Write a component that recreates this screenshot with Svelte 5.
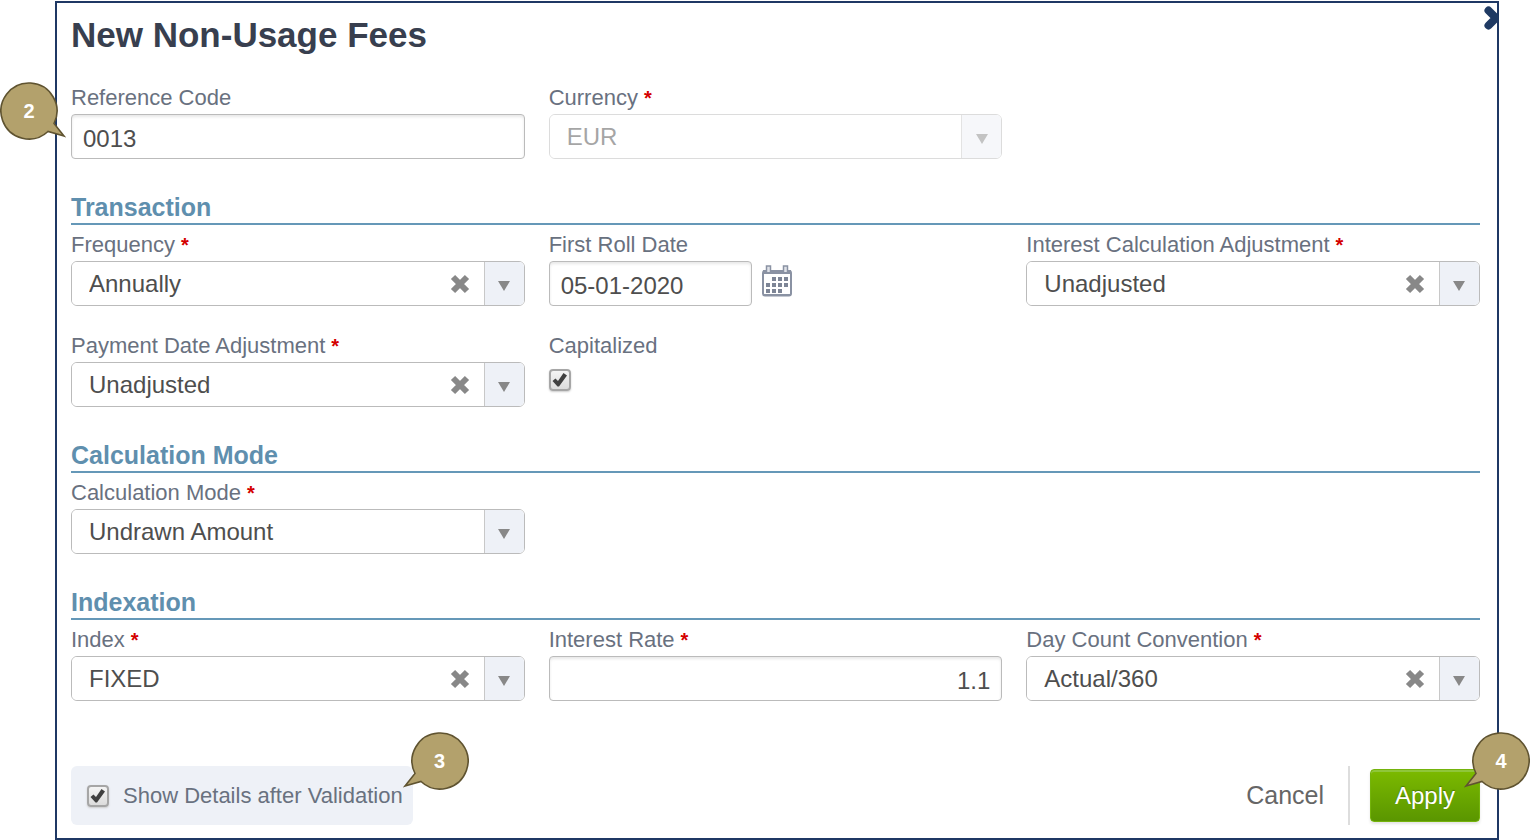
<script>
	let form = $state({
		reference: "0013",
		currency: "EUR",
		frequency: "Annually",
		firstRoll: "05-01-2020",
		interestAdjustment: "Unadjusted",
		paymentAdjustment: "Unadjusted",
		capitalized: true,
		mode: "Undrawn Amount",
		index: "FIXED",
		rate: "1.1",
		dayCount: "Actual/360",
		showDetails: true
	});

	const options = {
		currency: ["EUR"],
		frequency: ["Annually"],
		interestAdjustment: ["Unadjusted"],
		paymentAdjustment: ["Unadjusted"],
		mode: ["Undrawn Amount"],
		index: ["FIXED"],
		dayCount: ["Actual/360"]
	};

	// x, y, of the day squares in the calendar icon
	const days = [
		[10, 12], [16, 12], [22, 12],
		[4, 18], [10, 18], [16, 18], [22, 18],
		[4, 24], [10, 24], [16, 24]
	];
</script>

{#snippet label(id, text, required)}
	<label class="label" for={id}>{text}{#if required}<span class="star">*</span>{/if}</label>
{/snippet}

{#snippet dropdown(id, text, clearable = true, disabled = false)}
	<div class="field">
		{@render label(id, text, true)}
		<div class="dropdown" class:disabled>
			<select {id} bind:value={form[id]} {disabled}>
				{#each options[id] as option}
					<option>{option}</option>
				{/each}
			</select>
			{#if clearable}
				<button type="button" class="clear" aria-label="Clear {text}" onclick={() => form[id] = ""}>
					<svg viewBox="0 0 20 20" width="20" height="20"><path d="M3 3 17 17M17 3 3 17" stroke="#888" stroke-width="6" /></svg>
				</button>
			{/if}
			<span class="arrow">
				<svg viewBox="0 0 12 10" width="12" height="10"><path d="M0 0h12L6 10z" fill="#888" /></svg>
			</span>
		</div>
	</div>
{/snippet}

{#snippet callout(number, flipped = false)}
	<span class="callout callout-{number}" class:flipped>
		<svg viewBox="-29 -29 66 58" width="66" height="58">
			<path d="M35 25 19 20.500A28 28 0 1 1 25 12.500Z" fill="#b3a16c" stroke="#5f5330" stroke-width="1.600" />
		</svg>
		<b>{number}</b>
	</span>
{/snippet}

{#snippet checkbox(id)}
	<span class="check">
		<input type="checkbox" {id} bind:checked={form[id]} />
		{#if form[id]}
			<svg viewBox="0 0 22 22" width="22" height="22"><path d="M3.500 12 6.500 9.500 9 12 14.500 4 18 6.500 10 17.500H8.500Z" fill="#404040" /></svg>
		{/if}
	</span>
{/snippet}

<form class="dialog" onsubmit={(e) => e.preventDefault()}>
	<button type="button" class="close" aria-label="Close">
		<svg viewBox="0 0 16 26" width="16" height="26"><path d="M5.500 5.500 13 13 5.500 20.500" fill="none" stroke="#1f3a63" stroke-width="8" stroke-linecap="round" stroke-linejoin="round" /></svg>
	</button>

	<h1>New Non-Usage Fees</h1>

	<div class="grid">
		<div class="field">
			{@render label("reference", "Reference Code")}
			<input class="text" type="text" id="reference" bind:value={form.reference} />
			{@render callout(2)}
		</div>
		{@render dropdown("currency", "Currency", false, true)}
	</div>

	<section>
		<h2>Transaction</h2>
		<div class="grid">
			{@render dropdown("frequency", "Frequency")}
			<div class="field">
				{@render label("firstRoll", "First Roll Date")}
				<div class="date">
					<input class="text" type="text" id="firstRoll" bind:value={form.firstRoll} />
					<button type="button" class="calendar" aria-label="Open calendar">
						<svg viewBox="0 0 30 32" width="30" height="32">
							<rect x="1" y="6" width="28" height="24.500" rx="2" fill="#fff" stroke="#8a92a3" stroke-width="2" />
							<path d="M1 5h28v4H1zM1 29h28v2H1z" fill="#8a92a3" />
							<path d="M4.500 7V1h4v6M21.500 7V1h4v6" fill="#dfe2e8" stroke="#8a92a3" stroke-width="1.500" />
							{#each days as [x, y]}
								<rect {x} {y} width="4" height="4" fill="#7d8596" />
							{/each}
						</svg>
					</button>
				</div>
			</div>
			{@render dropdown("interestAdjustment", "Interest Calculation Adjustment")}
			{@render dropdown("paymentAdjustment", "Payment Date Adjustment")}
			<div class="field">
				{@render label("capitalized", "Capitalized")}
				<div class="check-row">{@render checkbox("capitalized")}</div>
			</div>
		</div>
	</section>

	<section>
		<h2>Calculation Mode</h2>
		<div class="grid">
			{@render dropdown("mode", "Calculation Mode", false)}
		</div>
	</section>

	<section>
		<h2>Indexation</h2>
		<div class="grid">
			{@render dropdown("index", "Index")}
			<div class="field">
				{@render label("rate", "Interest Rate", true)}
				<input class="text number" type="text" id="rate" bind:value={form.rate} />
			</div>
			{@render dropdown("dayCount", "Day Count Convention")}
		</div>
	</section>

	<footer>
		<div class="details">
			{@render checkbox("showDetails")}
			<label for="showDetails">Show Details after Validation</label>
			{@render callout(3, true)}
		</div>
		<div class="actions">
			<button type="button" class="cancel">Cancel</button>
			<div class="apply-wrap">
				<button type="submit" class="apply">Apply</button>
				{@render callout(4, true)}
			</div>
		</div>
	</footer>
</form>

<style>
	:global(body) {
		background: #fff;
		font-family: "Liberation Sans", Arial, sans-serif;
		overflow-x: hidden;
	}

	* {
		box-sizing: border-box;
	}

	button, input, select {
		font-family: inherit;
		margin: 0;
	}

	button {
		border: none;
		background: none;
		padding: 0;
		cursor: pointer;
	}

	svg {
		display: block;
	}

	.dialog {
		position: relative;
		margin: 1px 31px 0 55px;
		padding: 12px 17px 13px 14px;
		border: 2px solid #1f3864;
	}

	.close {
		position: absolute;
		top: 2px;
		right: -2px;
	}

	h1 {
		margin: 0 0 28px;
		font-size: 35px;
		line-height: 40px;
		color: #383f4f;
	}

	section {
		margin-top: 32px;
	}

	h2 {
		margin: 0 0 5px;
		font-size: 25px;
		line-height: 32px;
		color: #5f8fae;
		border-bottom: 2px solid #6598b8;
	}

	.grid {
		display: grid;
		grid-template-columns: repeat(3, minmax(0, 1fr));
		gap: 25px 24px;
	}

	.field {
		position: relative;
	}

	.label {
		display: block;
		padding-bottom: 2px;
		font-size: 22px;
		line-height: 29px;
		color: #69717f;
	}

	.star {
		margin-left: 6px;
		font-size: 20px;
		line-height: 20px;
		font-weight: bold;
		color: #d40000;
	}

	.text {
		display: block;
		width: 100%;
		height: 45px;
		padding: 4px 11px 0;
		font-size: 24px;
		color: #4e4e4e;
		background: #fff;
		border: 1px solid #bbb;
		border-radius: 4px;
		box-shadow: inset 0 2px 3px #e8e8e8;
	}

	.number {
		text-align: right;
	}

	.dropdown {
		position: relative;
		height: 45px;
		border: 1px solid #bbb;
		border-radius: 6px;
		overflow: hidden;
	}

	.dropdown select {
		appearance: none;
		width: 100%;
		height: 100%;
		padding: 0 80px 0 17px;
		border: none;
		background: #fff;
		font-size: 24px;
		color: #4e4e4e;
		opacity: 1;
	}

	.disabled {
		opacity: 0.5;
	}

	.clear {
		position: absolute;
		top: 12px;
		right: 54px;
	}

	.arrow {
		position: absolute;
		top: 0;
		right: 0;
		bottom: 0;
		width: 40px;
		padding-top: 4px;
		display: flex;
		align-items: center;
		justify-content: center;
		background: #eef1f7;
		border-left: 1px solid #c8c8c8;
		pointer-events: none;
	}

	.date {
		display: flex;
		gap: 10px;
	}

	.date .text {
		width: 203px;
	}

	.calendar {
		height: 32px;
		margin-top: 4px;
	}

	.check-row {
		padding-top: 7px;
	}

	.check {
		position: relative;
		display: block;
		width: 22px;
		height: 22px;
	}

	.check input {
		appearance: none;
		display: block;
		width: 22px;
		height: 22px;
		border: 2px solid #a6a6a6;
		border-radius: 4px;
		background: linear-gradient(#f4f4f4, #dcdcdc);
		box-shadow: 0 1px 2px #ccc;
	}

	.check svg {
		position: absolute;
		top: 0;
		left: 0;
		pointer-events: none;
	}

	footer {
		margin-top: 65px;
		display: flex;
		justify-content: space-between;
	}

	.details {
		position: relative;
		display: flex;
		align-items: center;
		gap: 14px;
		height: 59px;
		padding: 0 10px 0 16px;
		border-radius: 6px;
		background: #eef1f7;
		font-size: 22px;
		color: #69717f;
	}

	.actions {
		display: flex;
		align-items: center;
	}

	.cancel {
		height: 59px;
		padding-right: 24px;
		margin-right: 20px;
		border-right: 2px solid #ddd;
		font-size: 25px;
		color: #666;
	}

	.apply-wrap {
		position: relative;
	}

	.apply {
		width: 110px;
		height: 53px;
		border: 1px solid #74b30c;
		border-radius: 4px;
		background: linear-gradient(#7cba00, #5a9600);
		box-shadow: inset 0 2px 0 #8fc63a, 0 2px 3px #e4e4e4;
		font-size: 24px;
		color: #fff;
		text-shadow: 0 -1px 1px #4a7a00;
	}

	.callout {
		position: absolute;
		width: 66px;
		height: 58px;
		pointer-events: none;
	}

	.callout b {
		position: absolute;
		top: 0;
		left: 0;
		width: 58px;
		font-size: 20px;
		line-height: 58px;
		text-align: center;
		color: #fff;
	}

	.flipped svg {
		transform: scaleX(-1);
	}

	.flipped b {
		left: 8px;
	}

	.callout-2 {
		top: -1px;
		left: -71px;
	}

	.callout-3 {
		top: -34px;
		right: -56px;
	}

	.callout-4 {
		top: -37px;
		right: -50px;
	}
</style>
